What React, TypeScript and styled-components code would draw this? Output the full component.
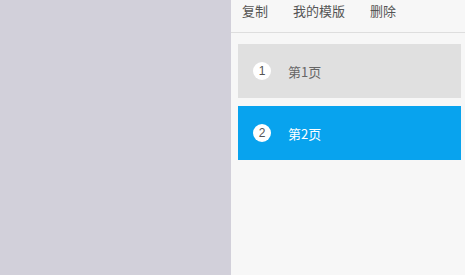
import React from 'react';
import styled, { createGlobalStyle } from 'styled-components';

const GlobalStyle = createGlobalStyle`
    html, body { margin: 0; padding: 0; height: 100%; }
    body {
        font-family: "Microsoft YaHei", "Noto Sans CJK SC", "Liberation Sans", sans-serif;
        background: #f7f7f7;
    }
    #root { height: 100%; }
`

const pages = [
    { no: 1, name: '第1页' },
    { no: 2, name: '第2页' },
];

const actions = ['复制', '我的模版', '删除'];

export default function App() {
    const current = 2;

    return (
        <>
        <GlobalStyle />
        <SLayout>
            <SCanvas />
            <SPanel>
                <SToolbar>
                    {actions.map((a) => (
                        <SAction key={a}>{a}</SAction>
                    ))}
                </SToolbar>
                <SList>
                    {pages.map((p) => (
                        <SPage key={p.no} active={p.no === current}>
                            <SBadge>{p.no}</SBadge>
                            <SName>{p.name}</SName>
                        </SPage>
                    ))}
                </SList>
            </SPanel>
        </SLayout>
        </>
    )
}

const SLayout = styled.div`
    display: flex;
    height: 100vh;
    width: 100vw;
    overflow: hidden;
`

const SCanvas = styled.div`
    width: 231px;
    flex-shrink: 0;
    background: #d2d0da;
`

const SPanel = styled.div`
    flex: 1;
    background: #f7f7f7;
    display: flex;
    flex-direction: column;
`

const SToolbar = styled.div`
    height: 33px;
    box-sizing: border-box;
    border-bottom: 1px solid #dedede;
    display: flex;
    align-items: flex-start;
    gap: 25px;
    padding: 2px 0 0 11px;
`

const SAction = styled.span`
    font-size: 13px;
    line-height: 18px;
    color: #555;
    cursor: pointer;
`

const SList = styled.div`
    display: flex;
    flex-direction: column;
    gap: 8px;
    padding: 11px 4px 0 7px;
`

const SPage = styled.div<{ active?: boolean }>`
    height: 54px;
    display: flex;
    align-items: center;
    padding-left: 15px;
    background: ${(p) => (p.active ? '#08a3ee' : '#e0e0e0')};
    color: ${(p) => (p.active ? '#fff' : '#666')};
`

const SBadge = styled.span`
    width: 18px;
    height: 18px;
    border-radius: 50%;
    background: #fff;
    color: #555;
    font-family: "Liberation Sans", sans-serif;
    font-size: 12px;
    display: flex;
    align-items: center;
    justify-content: center;
`

const SName = styled.span`
    margin-left: 17px;
    font-size: 13px;
`
